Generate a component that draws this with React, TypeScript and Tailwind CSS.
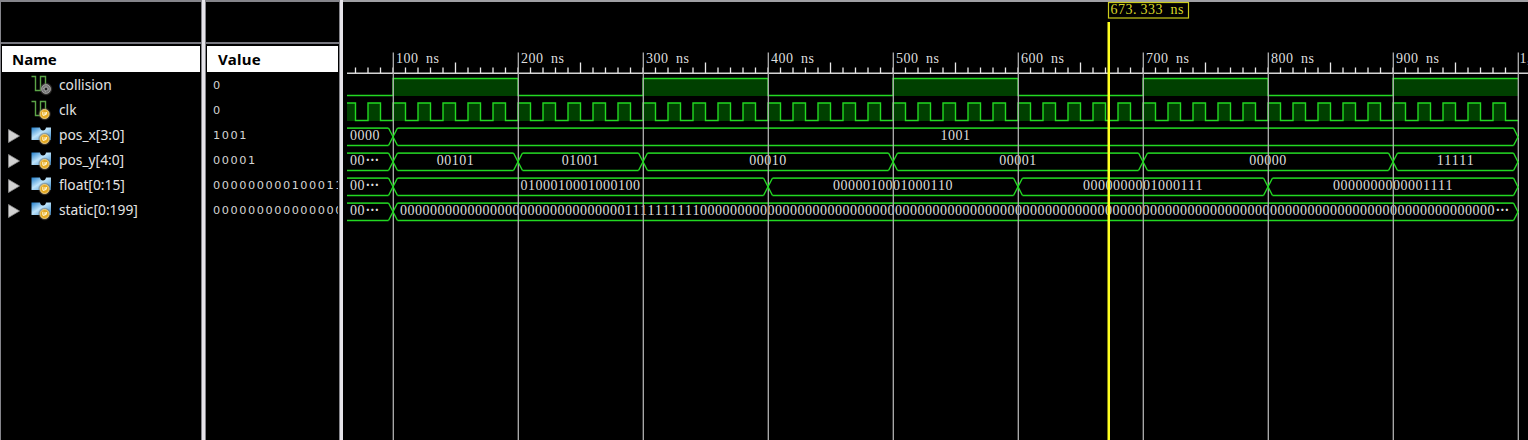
import React from "react";

const GREEN = "#22d822";
const names = ["collision", "clk", "pos_x[3:0]", "pos_y[4:0]", "float[0:15]", "static[0:199]"];
const values = ["0", "0", "1001", "00001", "000000000100011", "000000000000000"];
const grid = Array.from({ length: 10 }, (_, i) => 393 + i * 125);
const staticBits = "0".repeat(30) + "1".repeat(10) + "0".repeat(106);

type Bus = { y: number; first: string; edges: number[]; labels: string[] };
const buses: Bus[] = [
  { y: 128, first: "0000", edges: [393, 1518], labels: ["1001"] },
  { y: 153, first: "00", edges: [393, 518, 643, 893, 1143, 1393, 1518], labels: ["00101", "01001", "00010", "00001", "00000", "11111"] },
  { y: 178, first: "00", edges: [393, 768, 1018, 1268, 1518], labels: ["0100010001000100", "0000010001000110", "0000000001000111", "0000000000001111"] },
  { y: 203, first: "00", edges: [393, 1518], labels: [staticBits] },
];

type CellsProps = { x: number; y: number; text: string; fill?: string; dots?: boolean };

function Cells({ x, y, text, fill = "#dedede", dots = false }: CellsProps) {
  const xs = Array.from(text, (_, i) => x + i * 7.5).join(" ");
  const end = x + text.length * 7.5;
  return (
    <text x={xs} y={y} fill={fill} className="whitespace-pre font-['Liberation_Serif',serif] text-[14px]">
      {text}
      {dots && (
        <tspan x={`${end + 0.5} ${end + 5} ${end + 9.5}`} className="font-bold">
          ···
        </tspan>
      )}
    </text>
  );
}

function SignalIcon({ index }: { index: number }) {
  const gray = index === 0;
  return (
    <svg width="22" height="22" viewBox="0 0 22 22" className="shrink-0">
      <defs>
        <linearGradient id={`blue${index}`} x1="0" y1="0" x2="1" y2="1">
          <stop offset="0" stopColor="#2380cc" />
          <stop offset="0.45" stopColor="#bfe4fa" />
          <stop offset="1" stopColor="#2f83c8" />
        </linearGradient>
        <radialGradient id={`halo${index}`}>
          <stop offset="0.55" stopColor={gray ? "#8a8a8a" : "#b89463"} />
          <stop offset="1" stopColor="#55504a" stopOpacity="0.2" />
        </radialGradient>
      </defs>
      {index < 2 ? (
        <path d="M0.5 2.5H4.5V16.5H9.5V2.5H14.5V10" fill="none" stroke="#5ca548" strokeWidth="1.4" />
      ) : (
        <path d="M0.5 3.5H9Q9.5 6.5 12 6.5Q14.5 6.5 15 3.5H20V16H0.5Z" fill={`url(#blue${index})`} />
      )}
      <circle cx={gray ? 15 : 13.6} cy="15" r="6.4" fill={`url(#halo${index})`} />
      {gray ? (
        <>
          <circle cx="15" cy="15" r="4.4" fill="#777" stroke="#aaa" strokeWidth="0.8" />
          <path d="M15 12.6L17.4 15L15 17.4L12.6 15Z" fill="#222" stroke="#ddd" strokeWidth="0.8" />
        </>
      ) : (
        <>
          <circle cx="13.6" cy="15" r="4.5" fill="#e4a822" stroke="#f8dc91" strokeWidth="0.8" />
          <path d="M11.8 12.8V15.5Q12.8 17.3 14 15.5V13M14 15.5Q15.4 16 15.6 13" fill="none" stroke="#fff5cf" strokeWidth="1.1" />
        </>
      )}
    </svg>
  );
}

function Waveform() {
  const ticks = Array.from({ length: 94 }, (_, i) => ({ x: 355 + i * 12.5, i })).filter((t) => t.x < 1517);
  let clk = "M347 103H355.5V120.5H368";
  let fill = "M347 103H355.5V121H347Z";
  for (let x = 368; x < 1510; x += 25) {
    clk += `V103H${x + 12.5}V120.5H${Math.min(x + 25, 1518)}`;
    fill += `M${x} 103H${x + 12.5}V121H${x}Z`;
  }
  let col = "M347 95.5H393";
  for (let i = 0; i < 9; i++) col += `V${i % 2 ? 95.5 : 78.5}H${518 + i * 125}`;
  return (
    <svg width="1185" height="440" viewBox="343 0 1185 440" className="block shrink-0">
      {[393, 643, 893, 1143, 1393].map((x) => (
        <rect key={x} x={x} y="78" width="125" height="18" fill="#004000" />
      ))}
      <path d={fill} fill="#004000" />
      <path d={col} fill="none" stroke={GREEN} strokeWidth="1.3" />
      <path d={clk} fill="none" stroke={GREEN} strokeWidth="1.4" />
      {buses.map((b) => (
        <g key={b.y}>
          <path d={`M347 ${b.y + 0.2}H388.5`} stroke="#1fbc1f" strokeWidth="1.7" />
          <path d={`M347 ${b.y + 17.5}H388.5`} stroke={GREEN} strokeWidth="1.4" />
          {b.labels.map((label, i) => {
            const l = b.edges[i] + 4.5;
            const r = b.edges[i + 1] - 4.5;
            const long = label.length > 100;
            const tx = long ? 400 : (l + r) / 2 - label.length * 3.75;
            return (
              <g key={i}>
                <path d={`M${l} ${b.y + 0.2}H${r}`} stroke="#1fbc1f" strokeWidth="1.7" />
                <path d={`M${l} ${b.y + 17.5}H${r}`} stroke={GREEN} strokeWidth="1.4" />
                <Cells x={tx} y={b.y + 12} text={label} dots={long} />
              </g>
            );
          })}
          <Cells x={350} y={b.y + 12} text={b.first} dots={b.first.length === 2} />
        </g>
      ))}
      <path d="M347 73.3H1528" stroke="#d4d4d4" strokeWidth="1.4" />
      {ticks.map(({ x, i }) => (
        <path key={x} d={`M${x + 0.5} ${i % 10 === 8 ? 62.5 : 67.5}V73`} stroke="#e8e8e8" strokeWidth="1.3" />
      ))}
      {grid.map((x) => (
        <path key={x} d={`M${x + 0.3} 52.5V440`} stroke="#b0b0b0" strokeWidth="1.3" />
      ))}
      {buses.map((b) =>
        b.edges.map((x) => (
          <path
            key={`${b.y}-${x}`}
            d={
              x === 1518
                ? `M${x - 4.5} ${b.y}L${x} ${b.y + 9}L${x - 4.5} ${b.y + 17.5}`
                : `M${x - 4.5} ${b.y}L${x + 4.5} ${b.y + 17.5}M${x + 4.5} ${b.y}L${x - 4.5} ${b.y + 17.5}`
            }
            fill="none"
            stroke={GREEN}
            strokeWidth="1.4"
          />
        )),
      )}
      {grid.slice(0, 9).map((x, i) => (
        <Cells key={x} x={x + 3} y={63} text={`${i + 1}00 ns`} />
      ))}
      <Cells x={1519.5} y={63} text="1," />
      <rect x="1108.5" y="2.5" width="80" height="15.5" fill="#000" stroke="#cccc1c" strokeWidth="1.2" />
      <Cells x={1110.5} y={14} text="673.333 ns" fill="#d8d828" />
      <rect x="1107.5" y="22" width="2.5" height="418" fill="#ffff20" />
    </svg>
  );
}

export default function App() {
  return (
    <div className="flex h-[440px] w-[1528px] overflow-hidden bg-black text-[#e4e4e4]">
      <section className="w-[202px] shrink-0 border-x border-t-2 border-[#85858b]">
        <div className="h-[42px] border-b-2 border-[#77777f]" />
        <div className="mx-px mt-[2px] h-[26px] bg-white pl-[10px] font-['Noto_Sans',sans-serif] text-[15px] leading-[26px] font-bold text-black">Name</div>
        <div>
          {names.map((name, i) => (
            <div key={name} className="flex h-[25px] items-center">
              <div className="flex w-[30px] shrink-0 pl-[7px]">
                {i > 1 && (
                  <svg width="12" height="14" viewBox="0 0 12 14" className="mt-[3px]">
                    <path d="M0.5 0.5L11.5 7L0.5 13.5Z" fill="#d2d2d2" stroke="#8d8d8d" strokeWidth="0.8" />
                  </svg>
                )}
              </div>
              <SignalIcon index={i} />
              <span className="ml-[6px] whitespace-pre font-['Noto_Sans',sans-serif] text-[13.8px] leading-[25px]">{name}</span>
            </div>
          ))}
        </div>
      </section>
      <div className="w-[3px] shrink-0 bg-[#e6e4ea]" />
      <section className="w-[135px] shrink-0 overflow-hidden border-x border-t-2 border-[#85858b]">
        <div className="h-[42px] border-b-2 border-[#77777f]" />
        <div className="mx-px mt-[2px] h-[26px] bg-white pl-[11px] font-['Noto_Sans',sans-serif] text-[15px] leading-[26px] font-bold tracking-[0.3px] text-black">Value</div>
        {values.map((value, i) => (
          <div key={i} className="mr-px h-[25px] overflow-hidden whitespace-pre pl-[7px] font-['DejaVu_Sans',sans-serif] text-[11.3px] leading-[28px] tracking-[1.55px] text-[#d4d4d4]">
            {value}
          </div>
        ))}
      </section>
      <div className="w-[3px] shrink-0 bg-[#e6e4ea]" />
      <main className="min-w-0 flex-1 border-t-2 border-[#a0a0a4]">
        <div className="-mt-[2px]">
          <Waveform />
        </div>
      </main>
    </div>
  );
}
